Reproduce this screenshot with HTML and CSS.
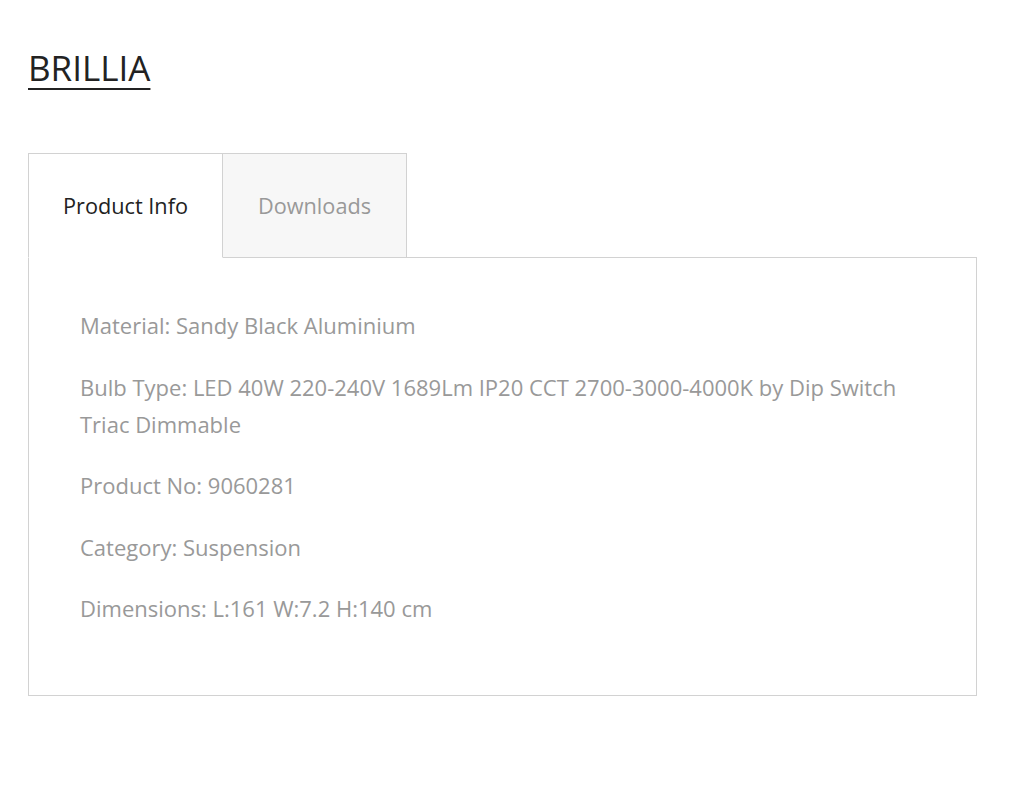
FILE: index.html
```html
<!DOCTYPE html>
<html lang="en">
	<head>
		<meta charset="UTF-8" />
		<meta name="viewport" content="width=device-width, initial-scale=1.0" />
		<title>Brillia</title>
		<link rel="stylesheet" href="styles.css">
	</head>
	<body>
		<div class="page">
			<h1 class="title"><a href="#">BRILLIA</a></h1>

			<div class="tabs">
				<ul class="tab-list">
					<li class="tab active">Product Info</li>
					<li class="tab">Downloads</li>
				</ul>
				<div class="panel">
					<p>Material: Sandy Black Aluminium</p>
					<p>Bulb Type: LED 40W 220-240V 1689Lm IP20 CCT 2700-3000-4000K by Dip Switch Triac Dimmable</p>
					<p>Product No: 9060281</p>
					<p>Category: Suspension</p>
					<p>Dimensions: L:161 W:7.2 H:140 cm</p>
				</div>
			</div>
		</div>
	</body>
</html>
```

FILE: styles.css
```css
body {
	margin: 0;
	background-color: #fff;
	font-family: "Open Sans", "Noto Sans", sans-serif;
}

.page {
	padding: 40px 47px 0 28px;
}

.title {
	margin: 0 0 57px;
	font-size: 35px;
	font-weight: 400;
	line-height: 56px;
}

.title a {
	color: #222;
	text-decoration: underline;
	text-decoration-thickness: 2px;
	text-underline-offset: 7px;
}

.tab-list {
	display: flex;
	margin: 0;
	padding: 0;
	list-style: none;
}

.tab {
	padding: 37.5px 35px;
	font-size: 21.7px;
	line-height: 28px;
	color: #999;
	background-color: #f7f7f7;
	border: 1px solid #d2d2d2;
	border-left: none;
	margin-bottom: -1px;
}

.tab.active {
	padding: 37.5px 34px;
	color: #222;
	background-color: #fff;
	border-left: 1px solid #d2d2d2;
	border-bottom-color: #fff;
}

.panel {
	border: 1px solid #d2d2d2;
	padding: 49px 51px 43px;
}

.panel p {
	margin: 0 0 24.5px;
	font-size: 22px;
	line-height: 37px;
	color: #999;
}
```
